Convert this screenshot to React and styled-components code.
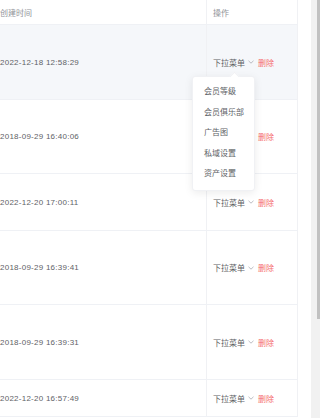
import React from 'react'
import styled, { createGlobalStyle } from 'styled-components'

const GlobalStyle = createGlobalStyle`
  html, body {
    margin: 0;
    padding: 0;
    background: #fff;
    overflow: hidden;
  }
  body {
    font-family: "Liberation Sans", "Noto Sans CJK SC", sans-serif;
    font-size: 8px;
    color: #606266;
  }
`

const Page = styled.div`
  position: relative;
  width: 320px;
  height: 418px;
  display: flex;
  overflow: hidden;
`

const Table = styled.div`
  width: 298px;
  display: flex;
  flex-direction: column;
`

const Row = styled.div`
  display: grid;
  grid-template-columns: 207px 91px;
  height: ${props => props.h}px;
  box-sizing: border-box;
  border-bottom: 1px solid #eff1f5;
  background: ${props => (props.hover ? '#f5f7fa' : '#fff')};
`

const Cell = styled.div`
  display: flex;
  align-items: center;
  box-sizing: border-box;
  border-right: 1px solid #f0f1f4;
  padding-left: ${props => (props.action ? '6px' : '0')};
  color: ${props => (props.head ? '#909399' : '#606266')};
  white-space: nowrap;
  overflow: hidden;
`

const Time = styled.span`
  letter-spacing: 0.25px;
`

const Actions = styled.div`
  display: flex;
  align-items: center;
  gap: 4px;
`

const DropLink = styled.span`
  display: flex;
  align-items: center;
  gap: 3px;
  color: #606266;
`

const Delete = styled.span`
  color: #f56c6c;
`

const Gap = styled.div`
  width: 13px;
`

const Track = styled.div`
  width: 9px;
  background: #f1f1f1;
  display: flex;
  justify-content: flex-end;
`

const Thumb = styled.div`
  width: 3px;
  height: 319px;
  background: #c1c1c1;
`

const Menu = styled.ul`
  position: absolute;
  left: 192px;
  top: 76px;
  width: 63px;
  margin: 0;
  padding: 5px 0;
  list-style: none;
  background: #fff;
  border: 1px solid #f0f1f4;
  border-radius: 3px;
  box-sizing: border-box;
  box-shadow: 0 2px 8px rgba(0, 0, 0, 0.08);

  &::before {
    content: '';
    position: absolute;
    top: -4px;
    left: 38px;
    width: 6px;
    height: 6px;
    background: #fff;
    border-left: 1px solid #f0f1f4;
    border-top: 1px solid #f0f1f4;
    transform: rotate(45deg);
  }
`

const MenuItem = styled.li`
  height: 20.6px;
  line-height: 20.6px;
  padding-left: 11px;
  color: #606266;
  white-space: nowrap;
`

const rows = [
  { time: '2022-12-18 12:58:29', h: 75, hover: true },
  { time: '2018-09-29 16:40:06', h: 74 },
  { time: '2022-12-20 17:00:11', h: 57 },
  { time: '2018-09-29 16:39:41', h: 74 },
  { time: '2018-09-29 16:39:31', h: 75 },
  { time: '2022-12-20 16:57:49', h: 37 },
]

const menu = ['会员等级', '会员俱乐部', '广告图', '私域设置', '资产设置']

const Chevron = () => (
  <svg width="6" height="4" viewBox="0 0 6 4">
    <path d="M0.5 0.8 L3 3.2 L5.5 0.8" fill="none" stroke="#a8abb2" strokeWidth="0.8" />
  </svg>
)

const App = () => {
  return (
    <Page>
      <GlobalStyle />
      <Table>
        <Row h={25}>
          <Cell head>创建时间</Cell>
          <Cell head action>操作</Cell>
        </Row>
        {rows.map((r) => (
          <Row key={r.time} h={r.h} hover={r.hover}>
            <Cell>
              <Time>{r.time}</Time>
            </Cell>
            <Cell action>
              <Actions>
                <DropLink>
                  下拉菜单 <Chevron />
                </DropLink>
                <Delete>删除</Delete>
              </Actions>
            </Cell>
          </Row>
        ))}
      </Table>
      <Gap />
      <Track>
        <Thumb />
      </Track>
      <Menu>
        {menu.map((m) => (
          <MenuItem key={m}>{m}</MenuItem>
        ))}
      </Menu>
    </Page>
  )
}

export default App
